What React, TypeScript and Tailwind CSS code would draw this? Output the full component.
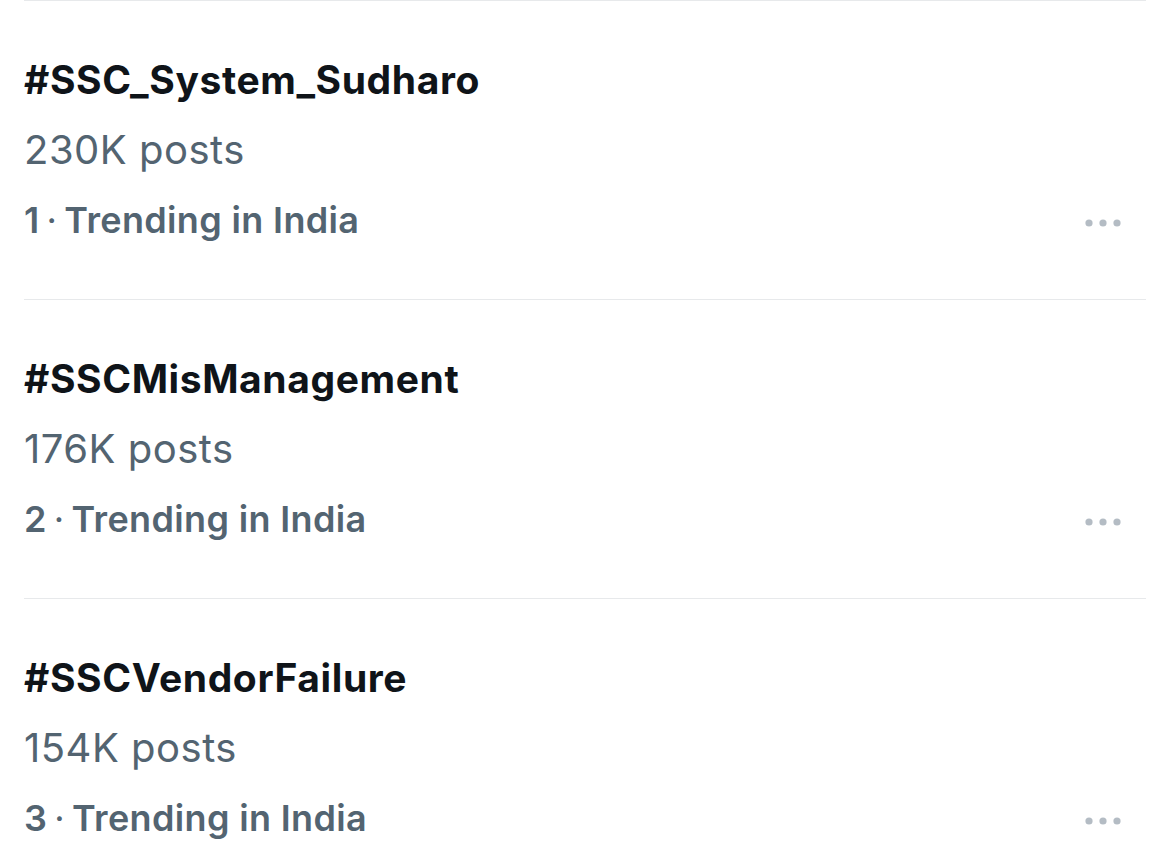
import React from 'react'

const TRENDS = [
  { rank: 1, tag: '#SSC_System_Sudharo', posts: '230K posts' },
  { rank: 2, tag: '#SSCMisManagement', posts: '176K posts' },
  { rank: 3, tag: '#SSCVendorFailure', posts: '154K posts' },
]

// ── More (…) icon ──────────────────────────────────────────────
function MoreDots() {
  return (
    <svg width="38" height="8" viewBox="0 0 38 8" className="flex-shrink-0 mt-[6px]">
      <circle cx="5" cy="4" r="3.6" fill="#b4bcc4" />
      <circle cx="19" cy="4" r="3.6" fill="#b4bcc4" />
      <circle cx="33" cy="4" r="3.6" fill="#b4bcc4" />
    </svg>
  )
}

function TrendRow({ rank, tag, posts }: { rank: number; tag: string; posts: string }) {
  return (
    <div className="mx-6 border-t border-[#e7e9eb] pt-[44px] pb-[44px]">
      <div className="text-[39px] leading-[70px] font-bold text-[#0f1419] tracking-[0.6px]">{tag}</div>
      <div className="text-[40px] leading-[70px] text-[#536471] tracking-[0.5px]">{posts}</div>
      <div className="flex items-center justify-between pr-[24px]">
        <span className="text-[36px] leading-[70px] font-semibold text-[#536471] tracking-[0.35px]">
          {rank}<span className="mx-[7px] font-normal">·</span>Trending in India
        </span>
        <MoreDots />
      </div>
    </div>
  )
}

export default function App() {
  return (
    <div className="w-[1170px] h-[853px] overflow-hidden bg-white" style={{ fontFamily: 'Inter, "Noto Sans", sans-serif' }}>
      {TRENDS.map(t => <TrendRow key={t.rank} {...t} />)}
    </div>
  )
}
